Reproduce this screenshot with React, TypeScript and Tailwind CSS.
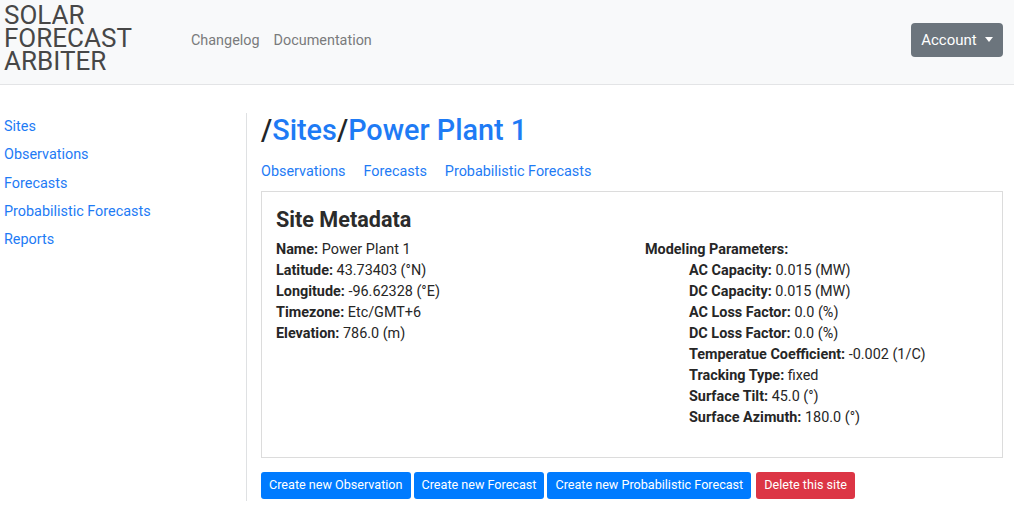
const sideLinks = ["Sites", "Observations", "Forecasts", "Probabilistic Forecasts", "Reports"];

const siteFields = [
    ["Name:", "Power Plant 1"],
    ["Latitude:", "43.73403 (°N)"],
    ["Longitude:", "-96.62328 (°E)"],
    ["Timezone:", "Etc/GMT+6"],
    ["Elevation:", "786.0 (m)"],
];

const modelFields = [
    ["AC Capacity:", "0.015 (MW)"],
    ["DC Capacity:", "0.015 (MW)"],
    ["AC Loss Factor:", "0.0 (%)"],
    ["DC Loss Factor:", "0.0 (%)"],
    ["Temperatue Coefficient:", "-0.002 (1/C)"],
    ["Tracking Type:", "fixed"],
    ["Surface Tilt:", "45.0 (°)"],
    ["Surface Azimuth:", "180.0 (°)"],
];

const App = () => {
    return (
        <div className="min-h-screen bg-white text-[#212529]" style={{ fontFamily: "Roboto, 'Liberation Sans', sans-serif" }}>
            {/* navbar */}
            <div className="h-[85px] bg-[#f8f9fa] border-b border-[#e3e4e6] flex items-center pl-[4px] pr-[11px]">
                <div className="text-[26px] leading-[23px] text-[#474747] w-[187px] mb-[8px]">
                    SOLAR<br />FORECAST<br />ARBITER
                </div>
                <div className="flex gap-[14px] text-[14.4px] text-[#7a7b7c] mb-[2px]">
                    <span>Changelog</span>
                    <span>Documentation</span>
                </div>
                <div className="ml-auto mb-[5px] h-[34px] w-[92px] rounded-[4px] bg-[#6c757d] text-white text-[15px] flex items-center justify-center gap-[8px]">
                    <span className="mt-[1px]">Account</span>
                    <span className="w-0 h-0 border-l-[4px] border-r-[4px] border-t-[5px] border-l-transparent border-r-transparent border-t-white"></span>
                </div>
            </div>

            <div className="flex">
                {/* sidebar */}
                <div className="w-[246px] pl-[4px] pt-[31px] flex flex-col gap-[7.25px] text-[14.4px] text-[#1e7bf5]">
                    {sideLinks.map((l) => (
                        <span key={l} className="leading-[21px]">{l}</span>
                    ))}
                </div>

                <div className="mt-[28px] border-l border-[#dfe1e3]"></div>

                {/* main */}
                <div className="flex-1 pl-[14px] pr-[11px] pt-[27px] pb-[2px]">
                    <div className="text-[28.8px] font-medium leading-[36px]">
                        <span className="text-[#212529]">/</span>
                        <span className="text-[#1e7bf5]">Sites</span>
                        <span className="text-[#212529]">/</span>
                        <span className="text-[#1e7bf5]">Power Plant 1</span>
                    </div>
                    <div className="flex gap-[18px] text-[14.4px] text-[#1e7bf5] mt-[14px] leading-[20px]">
                        <span>Observations</span>
                        <span>Forecasts</span>
                        <span>Probabilistic Forecasts</span>
                    </div>
                    <div className="mt-[9px] h-[267px] border border-[#dcdcdc] px-[14px] pt-[13px]">
                        <div className="text-[21.6px] font-bold leading-[29px] text-[#2b2b2b]">Site Metadata</div>
                        <div className="flex mt-[5px] text-[14.4px] leading-[21px] text-[#262626]">
                            <div className="w-[369px]">
                                {siteFields.map(([k, v]) => (
                                    <div key={k}><b className="font-bold">{k}</b> {v}</div>
                                ))}
                            </div>
                            <div>
                                <div className="font-bold">Modeling Parameters:</div>
                                <div className="pl-[44px]">
                                    {modelFields.map(([k, v]) => (
                                        <div key={k}><b className="font-bold">{k}</b> {v}</div>
                                    ))}
                                </div>
                            </div>
                        </div>
                    </div>
                    <div className="flex mt-[14px] text-[12.6px] text-white">
                        <span className="h-[27px] px-[8px] rounded-[3px] bg-[#007bff] flex items-center mr-[3px]">Create new Observation</span>
                        <span className="h-[27px] px-[8px] rounded-[3px] bg-[#007bff] flex items-center mr-[3px]">Create new Forecast</span>
                        <span className="h-[27px] px-[8px] rounded-[3px] bg-[#007bff] flex items-center mr-[5px]">Create new Probabilistic Forecast</span>
                        <span className="h-[27px] px-[8px] rounded-[3px] bg-[#dc3545] flex items-center">Delete this site</span>
                    </div>
                </div>
            </div>
        </div>
    );
};

export default App;
